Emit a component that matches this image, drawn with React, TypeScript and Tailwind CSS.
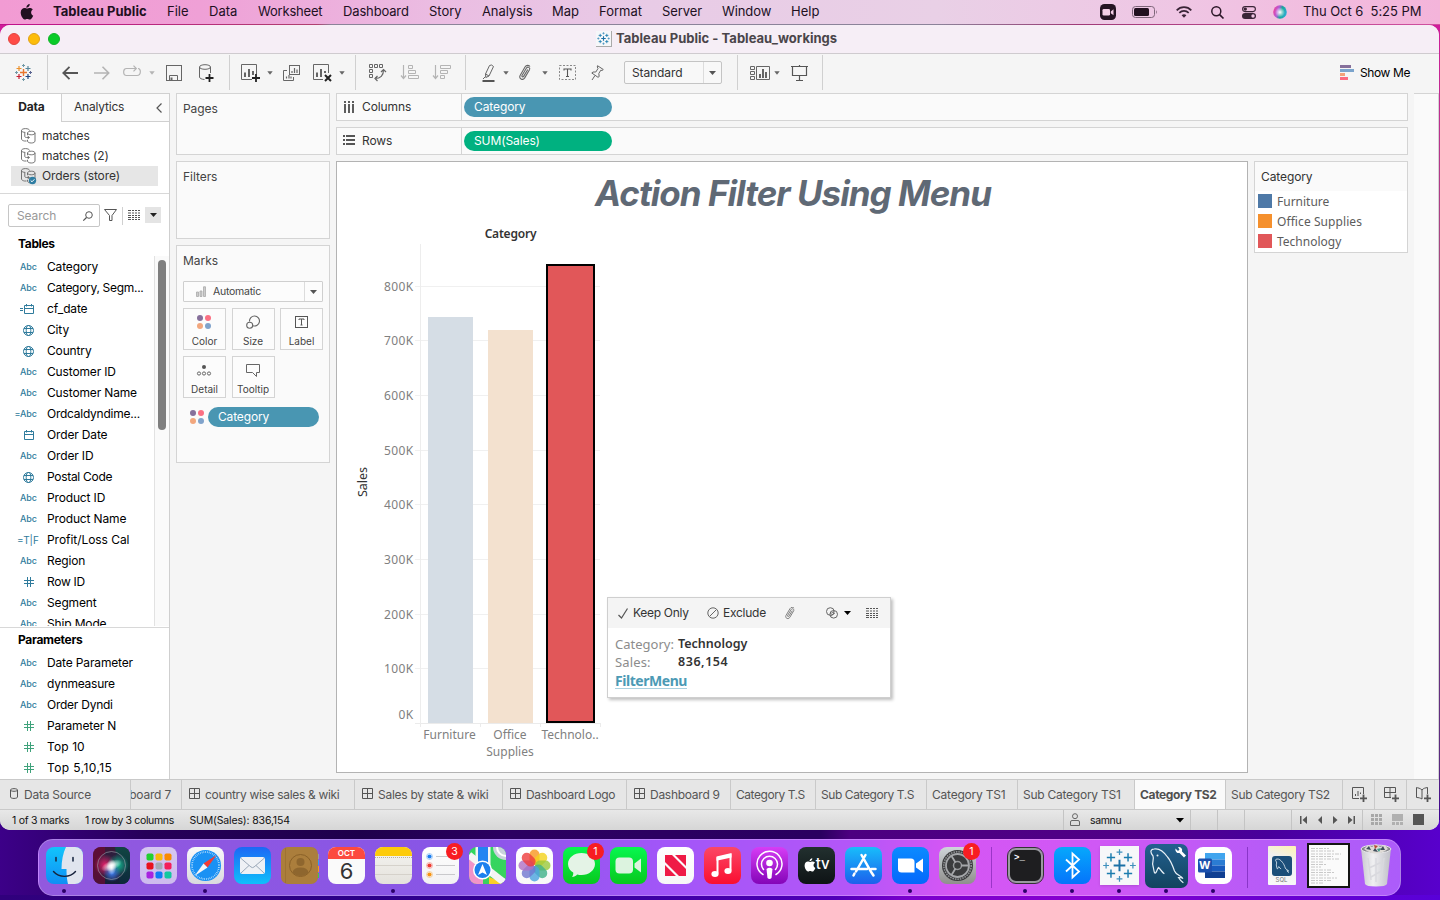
import React from "react";

type Kids = { children?: React.ReactNode };

const Svg = ({ w, h, c = "", children }: { w: number; h: number; c?: string } & Kids) => (
  <svg width={w} height={h} viewBox={`0 0 ${w} ${h}`} fill="none" className={`shrink-0 overflow-visible ${c}`}>
    {children}
  </svg>
);

const Plus = ({ x, y, r, c, w = 1 }: { x: number; y: number; r: number; c: string; w?: number }) => (
  <path d={`M${x - r} ${y}H${x + r}M${x} ${y - r}V${y + r}`} stroke={c} strokeWidth={w} />
);

const Caret = ({ c = "", color = "#666" }: { c?: string; color?: string }) => (
  <Svg w={6} h={4} c={c}>
    <path d="M0.3 0.3H5.7L3 3.8Z" fill={color} />
  </Svg>
);

/* ---------- menu bar ---------- */

const menus: [string, string][] = [
  ["File", "w-[42px]"],
  ["Data", "w-[49px]"],
  ["Worksheet", "w-[85px] tracking-[-0.2px]"],
  ["Dashboard", "w-[86px] tracking-[-0.15px]"],
  ["Story", "w-[53px]"],
  ["Analysis", "w-[70px] tracking-[-0.1px]"],
  ["Map", "w-[47px]"],
  ["Format", "w-[63px]"],
  ["Server", "w-[60px] tracking-[-0.1px]"],
  ["Window", "w-[69px] tracking-[-0.1px]"],
  ["Help", "w-[60px]"],
];

const MenuBar = () => (
  <div className="flex h-6 w-full shrink-0 items-center whitespace-nowrap bg-[linear-gradient(90deg,#f29bd3_0%,#efa0d6_14%,#ebbce2_30%,#e8cbe6_45%,#e9d0e6_65%,#efc6e4_82%,#f4b4da_100%)] text-[13px] text-[#21101f]">
    <Svg w={14} h={16} c="ml-[20px]">
      <path
        d="M9.700 0c.1 1-.3 1.900-.9 2.600-.6.7-1.500 1.200-2.400 1.100-.1-.9.300-1.900.9-2.500C7.900.5 8.900.1 9.700 0zM12.800 5.500c-.1.100-1.700 1-1.700 2.900 0 2.300 2 3.100 2.100 3.100 0 .1-.3 1.100-1.100 2.200-.7 1-1.400 1.900-2.400 1.900-1 0-1.300-.6-2.500-.6-1.100 0-1.500.6-2.500.6s-1.600-.9-2.400-2C1.400 12.300.7 10.300.7 8.500c0-3 1.900-4.600 3.900-4.600 1 0 1.900.7 2.500.7.6 0 1.600-.7 2.800-.7.500 0 2.100 0 2.900 1.600z"
        fill="#21101f"
      />
    </Svg>
    <span className="ml-[19px] w-[114px] font-bold tracking-[0.050px]">Tableau Public</span>
    {menus.map(([m, w]) => (
      <span key={m} className={`${w} shrink-0`}>
        {m}
      </span>
    ))}
    <Svg w={16} h={16} c="ml-[249px]">
      <rect width="16" height="16" rx="4.500" fill="#241422" />
      <rect x="2.500" y="5" width="7.500" height="6.500" rx="1.300" fill="#f3cfe6" />
      <path d="M10.800 7.500L13.500 5.300V11.200L10.800 9.200Z" fill="#f3cfe6" />
    </Svg>
    <Svg w={26} h={12} c="ml-[16px]">
      <rect x="0.500" y="0.500" width="22" height="11" rx="3" stroke="#7d6579" />
      <rect x="2" y="2" width="15" height="8" rx="1.500" fill="#21101f" />
      <path d="M24 4.200c1 .4 1 3.200 0 3.600z" fill="#7d6579" />
    </Svg>
    <Svg w={16} h={12} c="ml-[18px]">
      <path d="M0.700 4.300C4.700 0 11.300 0 15.300 4.300M3.300 6.900c2.700-2.700 6.700-2.700 9.400 0" stroke="#3a2437" strokeWidth="1.700" />
      <path d="M5.600 9.200C7 8 9 8 10.400 9.200L8 11.800Z" fill="#3a2437" />
    </Svg>
    <Svg w={13} h={13} c="ml-[19px]">
      <circle cx="5.300" cy="5.300" r="4.500" stroke="#2c1829" strokeWidth="1.500" />
      <path d="M8.600 8.600L12.500 12.500" stroke="#2c1829" strokeWidth="1.700" />
    </Svg>
    <Svg w={14} h={13} c="ml-[18px]">
      <rect x="0.600" y="0.600" width="12.800" height="5" rx="2.500" stroke="#3a2437" strokeWidth="1.100" />
      <circle cx="3.300" cy="3.100" r="1.700" fill="#3a2437" />
      <rect x="0" y="7" width="14" height="6" rx="3" fill="#3a2437" />
      <circle cx="11" cy="10" r="1.700" fill="#f0c6e4" />
    </Svg>
    <Svg w={14} h={14} c="ml-[17px]">
      <defs>
        <linearGradient id="siriS" x1="0" y1="0.300" x2="1" y2="0.600">
          <stop offset="0" stopColor="#f0409a" />
          <stop offset="0.350" stopColor="#b25bd8" />
          <stop offset="0.600" stopColor="#18a898" />
          <stop offset="1" stopColor="#2dacd8" />
        </linearGradient>
        <radialGradient id="siriG">
          <stop offset="0" stopColor="#fff" />
          <stop offset="1" stopColor="#fff" stopOpacity="0" />
        </radialGradient>
      </defs>
      <circle cx="7" cy="7" r="6.800" fill="url(#siriS)" />
      <circle cx="7" cy="7.300" r="5" fill="url(#siriG)" />
    </Svg>
    <span className="ml-[16px] whitespace-pre tracking-[-0.050px]">Thu Oct 6  5:25 PM</span>
  </div>
);

/* ---------- title + toolbar ---------- */

const TableauMark = ({ c = "" }: { c?: string }) => (
  <Svg w={17} h={17} c={c}>
    <Plus x={8.500} y={8.500} r={3.500} c="#e8762d" w={1.400} />
    <Plus x={4} y={4.500} r={2.500} c="#eb912c" w={1.200} />
    <Plus x={13} y={4.500} r={2.500} c="#59879b" w={1.200} />
    <Plus x={4} y={12.500} r={2.500} c="#c72035" w={1.200} />
    <Plus x={13} y={12.500} r={2.500} c="#1f457e" w={1.200} />
    <Plus x={8.500} y={1.500} r={1.500} c="#7199a6" />
    <Plus x={8.500} y={15.500} r={1.500} c="#7199a6" />
    <Plus x={1.500} y={8.500} r={1.500} c="#7199a6" />
    <Plus x={15.500} y={8.500} r={1.500} c="#5b6591" />
  </Svg>
);

const BlueMark = ({ s, bold }: { s: number; bold?: boolean }) => {
  const k = bold ? 1.500 : 1;
  return (
    <svg width={s} height={s} viewBox="0 0 16 16" fill="none">
      <rect width="16" height="16" fill="#f6f7f9" />
      <Plus x={8} y={8} r={2.400} c="#1b70a6" w={0.800 * k} />
      <Plus x={4.500} y={4.700} r={1.700} c="#1b7cae" w={0.600 * k} />
      <Plus x={11.500} y={4.700} r={1.700} c="#1b7cae" w={0.600 * k} />
      <Plus x={4.500} y={11.300} r={1.700} c="#1b7cae" w={0.600 * k} />
      <Plus x={11.500} y={11.300} r={1.700} c="#1b7cae" w={0.600 * k} />
      <Plus x={8} y={2.500} r={1.200} c="#3f90bd" w={0.500 * k} />
      <Plus x={8} y={13.500} r={1.200} c="#3f90bd" w={0.500 * k} />
      <Plus x={2.500} y={8} r={1.200} c="#3f90bd" w={0.500 * k} />
      <Plus x={13.500} y={8} r={1.200} c="#3f90bd" w={0.500 * k} />
    </svg>
  );
};

const clipPath =
  "M8.800 4.500L4.600 11.400c-.6 1-2.200.1-1.600-.9L7.500 3c1.200-1.900 4.100-.3 3 1.700L5.700 12.900c-1.900 3-6.300.6-4.600-2.500L6 2C7.500-.5 10.300.3 11 1.500";

const Sep = ({ c = "" }: { c?: string }) => <div className={`h-[35px] w-px shrink-0 bg-[#d0d0d0] ${c}`} />;

const Toolbar = () => (
  <div className="flex h-[39px] shrink-0 items-center bg-[#f5f5f5] pb-[2px]">
    <TableauMark c="ml-[15px]" />
    <Sep c="ml-[15px]" />
    <Svg w={16} h={14} c="ml-[14px]">
      <path d="M16 7H1.500M7.500 0.800L1.300 7L7.500 13.200" stroke="#555" strokeWidth="1.800" />
    </Svg>
    <Svg w={16} h={14} c="ml-[16px]">
      <path d="M0 7H14.500M8.500 0.800L14.700 7L8.500 13.200" stroke="#b4b4b4" strokeWidth="1.600" />
    </Svg>
    <Svg w={18} h={11} c="ml-[13px] -mt-[2px]">
      <path d="M7 2.500H3.500C-0.300 2.500 -0.300 9.500 3.500 9.500H14C18.300 9.500 18.300 2.500 15 2.500M4 2.500H13M10.500 -0.300L13.300 2.500L10.500 5.300" stroke="#b4b4b4" strokeWidth="1.200" />
    </Svg>
    <Caret c="ml-[8px]" color="#b4b4b4" />
    <Svg w={16} h={16} c="ml-[11px]">
      <rect x="0.500" y="0.500" width="15" height="15" stroke="#666" />
      <path d="M3.500 15.500V10.500H11.500V15.500" stroke="#666" />
      <path d="M4.500 12.500H6.500V15.500H4.500Z" fill="#666" />
    </Svg>
    <Svg w={16} h={18} c="ml-[17px]">
      <ellipse cx="6" cy="3" rx="5.500" ry="2.300" stroke="#666" />
      <path d="M0.500 3V13C0.500 14.300 2.500 15.300 5.500 15.500M11.500 3V9" stroke="#666" />
      <path d="M10.500 10V18M6.500 14H14.500" stroke="#222" strokeWidth="1.800" />
    </Svg>
    <Sep c="ml-[14px]" />
    <Svg w={19} h={18} c="ml-[11px]">
      <path d="M11 15.500H0.500V0.500H15.500V10" stroke="#666" />
      <path d="M4 13V8.500M8 13V5M12 11V7" stroke="#555" strokeWidth="1.800" />
      <path d="M15 10V18M11 14H19" stroke="#222" strokeWidth="1.800" />
    </Svg>
    <Caret c="ml-[7px]" />
    <Svg w={17} h={16} c="ml-[10px]">
      <rect x="6.500" y="0.500" width="10" height="9" stroke="#666" />
      <path d="M4 5.500H0.500V15.500H10.500V12" stroke="#666" />
      <path d="M9 8V6M11.500 8V3M14 8V4.500M3.500 13.500V11.500M6 13.500V10M8 13.500V11.500" stroke="#666" strokeWidth="1.200" />
    </Svg>
    <Svg w={19} h={18} c="ml-[13px]">
      <path d="M10 15.500H0.500V0.500H15.500V9" stroke="#666" />
      <path d="M4 13V8.500M8 13V5M12 9V7" stroke="#555" strokeWidth="1.800" />
      <path d="M12 11L18 17M18 11L12 17" stroke="#222" strokeWidth="2" />
    </Svg>
    <Caret c="ml-[7px]" />
    <Sep c="ml-[10px]" />
    <Svg w={17} h={17} c="ml-[13px]">
      <path d="M0.500 0.500h3v3h-3zM5.500 0.500h3v3h-3zM10.500 0.500h3v3h-3zM0.500 5.500h3v3h-3zM0.500 10.500h3v3h-3z" stroke="#666" />
      <path d="M6 14.500C11.500 14.500 14.500 11.500 14.500 6M12 8L14.500 5.500L17 8M8.500 12L6 14.500L8.500 17" stroke="#666" strokeWidth="1.200" />
    </Svg>
    <Svg w={18} h={15} c="ml-[15px]">
      <path d="M2.500 0V13M0 10.500L2.500 13.500L5 10.500" stroke="#b4b4b4" strokeWidth="1.200" />
      <path d="M7.500 0.500h4v3h-4zM7.500 5.500h7v3h-7zM7.500 10.500h10v3h-10z" stroke="#b4b4b4" />
    </Svg>
    <Svg w={18} h={15} c="ml-[14px]">
      <path d="M2.500 0V13M0 10.500L2.500 13.500L5 10.500" stroke="#b4b4b4" strokeWidth="1.200" />
      <path d="M7.500 0.500h10v3h-10zM7.500 5.500h7v3h-7zM7.500 10.500h4v3h-4z" stroke="#b4b4b4" />
    </Svg>
    <Sep c="ml-[14px]" />
    <Svg w={13} h={18} c="ml-[16px]">
      <path d="M3.500 10L7.500 1.500Q9.500 0 11.500 2.500L7 12L3.800 13.500ZM3.500 10L7 12M3.500 12.500L1 15" stroke="#666" />
      <path d="M0.500 17H12.500" stroke="#555" strokeWidth="2" />
    </Svg>
    <Caret c="ml-[8px]" />
    <Svg w={12} h={16} c="ml-[10px]">
      <path d={clipPath} stroke="#666" strokeWidth="1.100" />
    </Svg>
    <Caret c="ml-[11px]" />
    <Svg w={17} h={15} c="ml-[11px]">
      <rect x="0.500" y="0.500" width="16" height="14" stroke="#888" strokeDasharray="2 1.500" />
      <path d="M5 5.500V4H12V5.500M8.500 4V11.500M7 11.500H10" stroke="#555" strokeWidth="1.100" />
    </Svg>
    <Svg w={13} h={15} c="ml-[15px]">
      <path d="M6.500 0.700L12.300 4.500L11 5.500L9.800 5.200L7.800 8.500L8.200 11.500L7 12.300L0.800 8L2 7L4.800 7L7 3.500L6.300 2ZM4 10.500L1 15" stroke="#666" />
    </Svg>
    <div className="ml-[20px] flex h-[23px] w-[98px] shrink-0 items-center rounded-[2px] border border-[#c4c4c4] bg-[#f8f8f8] pl-[7px] text-[12px] text-[#333]">
      <span className="w-[71px] tracking-[-0.1px]">Standard</span>
      <div className="flex h-full flex-1 items-center justify-center border-l border-[#dcdcdc]">
        <Svg w={7} h={4}>
          <path d="M0 0H7L3.500 4Z" fill="#555" />
        </Svg>
      </div>
    </div>
    <Sep c="ml-[15px]" />
    <Svg w={20} h={14} c="ml-[12px]">
      <path d="M0.500 0.500h4v3h-4zM0.500 5.500h4v3h-4zM0.500 10.500h4v3h-4zM6.500 0.500h13v13h-13z" stroke="#666" />
      <path d="M10 12V8M13 12V3M16 12V6" stroke="#555" strokeWidth="1.800" />
    </Svg>
    <Caret c="ml-[4px]" />
    <Svg w={17} h={16} c="ml-[11px]">
      <path d="M0 1.500H17M8.500 0V1M1.500 1.500V10.500H15.500V1.500M8.500 10.500V15.500M5 15.500H12" stroke="#555" strokeWidth="1.200" />
    </Svg>
    <Sep c="ml-[14px]" />
    <div className="ml-auto mr-[29px] flex items-center gap-[6px] text-[12px] tracking-[-0.400px] text-black">
      <Svg w={14} h={15}>
        <path d="M0 0h11v3h-11z" fill="#86709b" />
        <path d="M0 4h14v3h-14z" fill="#7ba4cc" />
        <path d="M0 8h5v3h-5z" fill="#f2a27a" />
        <path d="M0 12h8v3h-8z" fill="#fb6b80" />
      </Svg>
      Show Me
    </div>
  </div>
);

/* ---------- data pane ---------- */

const SourceIcon = ({ checked }: { checked?: boolean }) => (
  <Svg w={15} h={16}>
    <path d="M5.500 13H3.500C2 12.800 0.500 12 0.500 11V2.500M0.500 2.500C0.500 1.400 2.300 0.600 4.500 0.600S8.500 1.400 8.500 2.500M0.500 2.500C0.500 3.600 2.200 4.400 4.300 4.400M3.800 4.500V8.500Q4 9.500 5.500 9.500H8M6.500 8L8.500 9.500L6.500 11" stroke="#666" strokeWidth="0.900" />
    <path d="M6.500 7V5C6.500 3.900 8.100 3.200 10.300 3.200S14 3.900 14 5V13C14 14.200 12.400 15 10.300 15S6.500 14.200 6.500 13V12M6.500 5C6.500 6 8.100 6.800 10.300 6.800S14 6 14 5" stroke="#666" strokeWidth="0.900" />
    {checked && (
      <>
        <circle cx="11.500" cy="12.500" r="3.700" fill="#2f7ea3" />
        <path d="M9.700 12.500L11 13.800L13.400 11.300" stroke="#fff" />
      </>
    )}
  </Svg>
);

const ListIcon = ({ c = "" }: { c?: string }) => (
  <Svg w={12} h={10} c={c}>
    <path d="M0 0.500H12M0 3H12M0 5.500H12M0 7.500H12M0 9.500H12" stroke="#555" strokeWidth="1" strokeDasharray="3 1 2 1 2 1 2 0" />
  </Svg>
);

type Kind = "abc" | "=abc" | "date" | "=date" | "geo" | "tf" | "num" | "gnum";

const KindIcon = ({ k }: { k: Kind }) => {
  const b = "#2f7b9c";
  if (k === "tf")
    return <span className="w-[20px] pr-[2px] text-right text-[10px] whitespace-nowrap tracking-[0px] text-[#2f7b9c]">=T|F</span>;
  if (k === "abc" || k === "=abc")
    return (
      <span className="flex w-[20px] justify-end text-[9px] font-medium tracking-[-0.050px] whitespace-nowrap text-[#2f7b9c]">
        {k === "abc" ? "Abc" : "=Abc"}
      </span>
    );
  if (k === "geo")
    return (
      <Svg w={11} h={11} c="ml-[6px]">
        <circle cx="5.500" cy="5.500" r="5" stroke={b} />
        <ellipse cx="5.500" cy="5.500" rx="2.300" ry="5" stroke={b} />
        <path d="M1 3.500H10M1 7.500H10" stroke={b} />
      </Svg>
    );
  if (k === "date" || k === "=date")
    return (
      <Svg w={11} h={10} c="ml-[7px]">
        <path d="M0.500 1.500h9v8h-9zM0.500 4.500h9M2.500 0v2.500M7.500 0v2.500" stroke={b} />
        {k === "=date" && <path d="M-4 4.500H-1M-4 6.500H-1" stroke={b} />}
      </Svg>
    );
  return (
    <Svg w={10} h={10} c="ml-[7px]">
      <path d="M3.500 0V10M6.500 0V10M0 3.500H10M0 6.500H10" stroke={k === "num" ? b : "#3fa27b"} />
    </Svg>
  );
};

const fields: [Kind, string, string?][] = [
  ["abc", "Category"],
  ["abc", "Category, Segm...", "tracking-[-0.300px]"],
  ["=date", "cf_date"],
  ["geo", "City"],
  ["geo", "Country"],
  ["abc", "Customer ID"],
  ["abc", "Customer Name"],
  ["=abc", "Ordcaldyndime...", "tracking-[-0.250px]"],
  ["date", "Order Date"],
  ["abc", "Order ID"],
  ["geo", "Postal Code", "tracking-[-0.300px]"],
  ["abc", "Product ID"],
  ["abc", "Product Name"],
  ["tf", "Profit/Loss Cal", "tracking-[-0.050px]"],
  ["abc", "Region"],
  ["num", "Row ID", "tracking-[-0.300px]"],
  ["abc", "Segment"],
  ["abc", "Ship Mode"],
];

const params: [Kind, string, string?][] = [
  ["abc", "Date Parameter"],
  ["abc", "dynmeasure", "tracking-[-0.250px]"],
  ["abc", "Order Dyndi", "tracking-[-0.250px]"],
  ["gnum", "Parameter N"],
  ["gnum", "Top 10", "tracking-[0.1px]"],
  ["gnum", "Top 5,10,15", "tracking-[0.400px]"],
];

const Field = ({ k, name, t = "tracking-[-0.150px]" }: { k: Kind; name: string; t?: string }) => (
  <div className={`flex h-[21px] shrink-0 items-center pl-[17px] text-[12px] text-black ${t}`}>
    <div className="flex w-[30px] shrink-0 items-center pt-[1px]">
      <KindIcon k={k} />
    </div>
    <span className="whitespace-nowrap">{name}</span>
  </div>
);

const DataPane = () => (
  <div className="flex w-[170px] shrink-0 flex-col border-r border-[#cfcfcf] bg-white">
    <div className="flex h-[29px] shrink-0 border-t border-[#d0d0d0] text-[12px] text-[#333]">
      <div className="flex w-[61px] items-center justify-center pb-[2px] pl-[2px] font-bold tracking-[-0.2px] text-[#222]">Data</div>
      <div className="flex flex-1 items-center border-b border-l border-[#d0d0d0] bg-[#fafafa] pl-[12px]">
        <span className="pb-px tracking-[-0.2px]">Analytics</span>
        <Svg w={6} h={10} c="ml-auto mr-[7px]">
          <path d="M5.500 0.500L1 5L5.500 9.500" stroke="#555" strokeWidth="1.200" />
        </Svg>
      </div>
    </div>
    <div className="flex h-[72px] shrink-0 flex-col border-b border-[#d8d8d8] pt-[4px] pl-[11px] text-[12px] text-[#333]">
      {["matches", "matches (2)", "Orders (store)"].map((s, i) => (
        <div key={s} className={`flex h-5 w-[147px] items-center gap-[6px] pl-[10px] tracking-[-0.1px] ${i === 2 ? "bg-[#e6e6e6]" : ""}`}>
          <SourceIcon checked={i === 2} />
          {s}
        </div>
      ))}
    </div>
    <div className="mt-[10px] flex h-[23px] shrink-0 items-center pl-[8px]">
      <div className="flex h-[23px] w-[92px] items-center rounded-[2px] border border-[#c6c6c6] pl-[8px] text-[12px] tracking-[-0.1px] text-[#999]">
        Search
        <Svg w={10} h={10} c="ml-auto mr-[6px]">
          <circle cx="6" cy="4" r="3.300" stroke="#555" />
          <path d="M3.500 6.500L0.300 9.700" stroke="#555" strokeWidth="1.200" />
        </Svg>
      </div>
      <Svg w={13} h={12} c="ml-[4px] -mt-px">
        <path d="M0.500 0.500H12.500L8 6.500V11.500H5.500V6.500Z" stroke="#555" />
      </Svg>
      <div className="ml-[5px] h-[18px] w-px bg-[#d0d0d0]" />
      <ListIcon c="ml-[5px] -mt-px" />
      <div className="-mt-px ml-[5px] flex h-4 w-4 items-center justify-center bg-[#e4e4e4]">
        <Svg w={7} h={4}>
          <path d="M0 0H7L3.500 4Z" fill="#222" />
        </Svg>
      </div>
    </div>
    <div className="mt-[8px] flex h-[18px] shrink-0 items-center pl-[18px] text-[12px] font-bold tracking-[-0.350px] text-black">Tables</div>
    <div className="mt-[3px] flex h-[370px] shrink-0 overflow-hidden">
      <div className="flex w-[154px] flex-col overflow-hidden">
        {fields.map(([k, n, t]) => (
          <Field key={n} k={k} name={n} t={t} />
        ))}
      </div>
      <div className="flex-1 border-l border-[#e2e2e2] bg-[#fafafa] pt-[4px] pl-[3px]">
        <div className="h-[170px] w-[8px] rounded-full bg-[#7f7f7f]" />
      </div>
    </div>
    <div className="mt-px flex h-[25px] shrink-0 items-center border-t border-[#d8d8d8] pl-[18px] text-[12px] font-bold tracking-[-0.300px] text-black">Parameters</div>
    {params.map(([k, n, t]) => (
      <Field key={n} k={k} name={n} t={t} />
    ))}
  </div>
);

/* ---------- cards ---------- */

const FourDots = ({ c = "" }: { c?: string }) => (
  <Svg w={14} h={14} c={c}>
    <circle cx="3" cy="3" r="3" fill="#86709b" />
    <circle cx="11" cy="3" r="3" fill="#fb7083" />
    <circle cx="3" cy="11" r="3" fill="#f2a77e" />
    <circle cx="11" cy="11" r="3" fill="#80a3cb" />
  </Svg>
);

const Card = ({ title, c, children }: { title: string; c: string } & Kids) => (
  <div className={`flex w-[154px] shrink-0 flex-col border border-[#d4d4d4] bg-[#fafafa] pl-[6px] ${c}`}>
    <div className="flex h-[29px] shrink-0 items-center text-[12px] tracking-[-0.050px] text-[#444]">{title}</div>
    {children}
  </div>
);

const MarkButton = ({ label, children }: { label: string } & Kids) => (
  <div className="flex h-[42px] w-[43px] flex-col items-center border border-[#d4d4d4] bg-[#fcfcfc] text-[10px] text-[#444]">
    <div className="mt-[3px] mr-px flex h-[20px] items-center">{children}</div>
    <span className="mt-[2px] leading-[15px] tracking-[0px]">{label}</span>
  </div>
);

const Cards = () => (
  <div className="ml-[6px] flex shrink-0 flex-col gap-[6px]">
    <Card title="Pages" c="h-[62px]" />
    <Card title="Filters" c="h-[78px]" />
    <Card title="Marks" c="h-[218px]">
      <div className="mt-[6px] flex h-[21px] w-[140px] shrink-0 items-center rounded-[1px] border border-[#cfcfcf] bg-[#fcfcfc] pl-[12px] text-[10.500px] text-[#444]">
        <Svg w={10} h={11}>
          <path d="M0.500 10.500V6H2.500V10.500ZM4 10.500V5H6V10.500ZM7.500 10.500V0.800H9.500V10.500Z" stroke="#aaa" fill="#ccc" strokeWidth="0.800" />
        </Svg>
        <span className="ml-[7px] w-[91px] tracking-[-0.250px]">Automatic</span>
        <div className="flex h-full flex-1 items-center justify-center border-l border-[#dcdcdc]">
          <Svg w={7} h={4}>
            <path d="M0 0H7L3.500 4Z" fill="#555" />
          </Svg>
        </div>
      </div>
      <div className="mt-[6px] grid w-[140px] grid-cols-3 gap-x-[5.500px] gap-y-[6px]">
        <MarkButton label="Color">
          <FourDots />
        </MarkButton>
        <MarkButton label="Size">
          <Svg w={14} h={14}>
            <path d="M3.500 6.500A5 5 0 1 1 7 10.800" stroke="#666" strokeWidth="1.100" />
            <circle cx="3.700" cy="10.200" r="3" stroke="#666" strokeWidth="1.100" />
          </Svg>
        </MarkButton>
        <MarkButton label="Label">
          <Svg w={13} h={12}>
            <rect x="0.500" y="0.500" width="12" height="11" stroke="#555" />
            <path d="M4 4V3H9V4M6.500 3V9M5.500 9H7.500" stroke="#555" />
          </Svg>
        </MarkButton>
        <MarkButton label="Detail">
          <Svg w={14} h={11}>
            <circle cx="7" cy="2" r="2" fill="#555" />
            <circle cx="2" cy="8.500" r="1.600" stroke="#666" />
            <circle cx="7" cy="8.500" r="1.600" stroke="#666" />
            <circle cx="12" cy="8.500" r="1.600" stroke="#666" />
          </Svg>
        </MarkButton>
        <MarkButton label="Tooltip">
          <Svg w={14} h={12}>
            <path d="M0.500 0.500H13.500V8.500H10.500V12.500L6.500 8.500H0.500Z" stroke="#666" />
          </Svg>
        </MarkButton>
      </div>
      <div className="mt-[9px] flex shrink-0 items-center pl-[7px]">
        <FourDots />
        <div className="ml-[4px] flex h-5 w-[111px] items-center rounded-full bg-[#4996b2] pl-[10px] text-[12px] tracking-[-0.150px] text-white">
          <span className="pb-px">Category</span>
        </div>
      </div>
    </Card>
  </div>
);

/* ---------- worksheet ---------- */

const Shelf = ({ label, pill, color, children }: { label: string; pill: string; color: string } & Kids) => (
  <div className="flex h-[28px] shrink-0 items-center border border-[#d4d4d4] bg-[#fafafa] text-[12px] text-[#333]">
    <div className="flex h-full w-[125px] items-center border-r border-[#d4d4d4] pl-[6px]">
      {children}
      <span className="ml-[7px] tracking-[-0.1px]">{label}</span>
    </div>
    <div className={`ml-[2px] flex h-5 w-[148px] items-center rounded-full pl-[10px] tracking-[-0.1px] text-white ${color}`}>{pill}</div>
  </div>
);

const gridY = [286, 340, 395, 450, 504, 559, 614, 668];
const axis = "fill-[#808080] text-[12px] [font-family:'Noto_Sans',sans-serif]";

const Chart = () => (
  <svg width="280" height="560" viewBox="337 212 280 560" className="shrink-0">
    <g shapeRendering="crispEdges">
      {gridY.map((y) => (
        <rect key={y} x="415" y={y} width="185" height="1" fill="#f0f0f0" />
      ))}
      <rect x="415" y="723" width="186" height="1" fill="#ebebeb" />
      {[420, 480, 540, 600].map((x) => (
        <rect key={x} x={x} y="723" width="1" height="4" fill="#ebebeb" />
      ))}
      <rect x="420" y="244" width="1" height="480" fill="#ededed" />
      <rect x="428" y="317" width="45" height="406" fill="#d5dde5" />
      <rect x="488" y="330" width="45" height="393" fill="#f3e1cf" />
      <rect x="546" y="264" width="49" height="459" fill="#000" />
      <rect x="548" y="266" width="45" height="455" fill="#e15759" />
    </g>
    <text x="510.500" y="238" textAnchor="middle" className="fill-[#333] text-[12px] font-semibold tracking-[-0.2px] [font-family:'Noto_Sans',sans-serif]">
      Category
    </text>
    {[...gridY, 714].map((y, i) => (
      <text key={y} x="413.500" y={y + 5} textAnchor="end" className="fill-[#808080] text-[12px] tracking-[0.350px] [font-family:'Noto_Sans',sans-serif]">
        {i === 8 ? "0K" : `${8 - i}00K`}
      </text>
    ))}
    <text transform="translate(367 482) rotate(-90)" textAnchor="middle" className="fill-[#333] text-[12.500px] [font-family:'Noto_Sans',sans-serif]">
      Sales
    </text>
    <text x="449.500" y="739" textAnchor="middle" className={axis}>
      Furniture
    </text>
    <text x="510" y="739" textAnchor="middle" className={axis}>
      Office
    </text>
    <text x="510" y="756" textAnchor="middle" className={axis}>
      Supplies
    </text>
    <text x="570" y="739" textAnchor="middle" className={axis}>
      Technolo..
    </text>
  </svg>
);

const Tooltip = () => (
  <div className="absolute top-[435px] left-[270px] flex h-[101px] w-[284px] flex-col border border-[#cfcfcf] bg-white shadow-[2px_2px_3px_rgba(0,0,0,0.25)]">
    <div className="flex h-[30px] shrink-0 items-center bg-[#f4f4f4] pl-[10px] text-[12px] text-[#333]">
      <Svg w={10} h={11}>
        <path d="M0.500 7L3.500 10L9.500 0.500" stroke="#555" strokeWidth="1.200" />
      </Svg>
      <span className="ml-[5px] w-[74px] tracking-[-0.300px]">Keep Only</span>
      <Svg w={12} h={12}>
        <circle cx="6" cy="6" r="5.200" stroke="#666" />
        <path d="M2.500 9.500L9.500 2.500" stroke="#666" />
      </Svg>
      <span className="ml-[4px] w-[62px] tracking-[-0.250px]">Exclude</span>
      <svg width="10" height="13" viewBox="0 0 12 16" fill="none" className="shrink-0">
        <path d={clipPath} stroke="#666" />
      </svg>
      <Svg w={12} h={12} c="ml-[31px]">
        <circle cx="4.300" cy="4.500" r="3.800" stroke="#666" />
        <circle cx="7.700" cy="7.300" r="3.800" stroke="#666" />
        <path d="M4 7L8 4.500M5 9L9 6" stroke="#666" strokeWidth="0.800" />
      </Svg>
      <Svg w={7} h={4} c="ml-[6px]">
        <path d="M0 0H7L3.500 4Z" fill="#000" />
      </Svg>
      <ListIcon c="ml-[15px]" />
    </div>
    <div className="flex flex-col pt-[7px] pl-[7px] text-[13px] leading-[18px] text-[#8c8c8c] [font-family:'Noto_Sans',sans-serif]">
      <div className="flex">
        <span className="w-[63px]">Category:</span>
        <span className="text-[12.500px] font-semibold text-[#333]">Technology</span>
      </div>
      <div className="flex">
        <span className="w-[63px] tracking-[0.150px]">Sales:</span>
        <span className="text-[12.500px] font-semibold tracking-[0.550px] text-[#333]">836,154</span>
      </div>
      <span className="mt-[2px] w-fit border-b border-[#a9d0df] text-[14px] leading-[15px] font-bold tracking-[-0.450px] text-[#4c9ab5]">FilterMenu</span>
    </div>
  </div>
);

const legend: [string, string, string][] = [
  ["Furniture", "bg-[#4e79a7]", ""],
  ["Office Supplies", "bg-[#f5902d]", "tracking-[0.080px]"],
  ["Technology", "bg-[#e15759]", ""],
];

const Worksheet = () => (
  <div className="ml-[6px] flex w-[1072px] shrink-0 flex-col gap-[6px]">
    <Shelf label="Columns" pill="Category" color="bg-[#4996b2]">
      <Svg w={12} h={12}>
        <path d="M2 0v2M2 3v9M6 0v2M6 3v9M10 0v2M10 3v9" stroke="#555" strokeWidth="1.900" />
      </Svg>
    </Shelf>
    <Shelf label="Rows" pill="SUM(Sales)" color="bg-[#00b180]">
      <Svg w={12} h={11} c="-mt-px">
        <path d="M0 1h2M3 1h9M0 5h2M3 5h9M0 9h2M3 9h9" stroke="#555" strokeWidth="1.900" />
      </Svg>
    </Shelf>
    <div className="flex gap-[6px]">
      <div className="relative flex h-[612px] w-[912px] flex-col border border-[#b3b3b3] bg-white">
        <div className="flex h-[50px] shrink-0 items-center justify-center pt-[12px] pl-[2px] text-[35px] font-bold tracking-[-0.970px] whitespace-nowrap text-[#5f6975] italic">
          Action Filter Using Menu
        </div>
        <Chart />
        <Tooltip />
      </div>
      <div className="flex h-[92px] w-[154px] flex-col border border-[#d4d4d4] bg-white">
        <div className="flex h-[29px] shrink-0 items-center bg-[#fafafa] pl-[6px] text-[12px] tracking-[-0.1px] text-[#333]">Category</div>
        {legend.map(([n, c, t]) => (
          <div key={n} className={`flex h-5 items-center gap-[5px] pl-[3px] text-[12px] text-[#5c5c5c] [font-family:'Noto_Sans',sans-serif] ${t}`}>
            <div className={`h-[14px] w-[14px] ${c}`} />
            <span className="pt-[2px]">{n}</span>
          </div>
        ))}
      </div>
    </div>
  </div>
);

/* ---------- sheet tabs + status ---------- */

const GridIcon = () => (
  <Svg w={11} h={11} c="mr-[5px] -mt-[2px]">
    <path d="M0.500 0.500h10v10h-10zM5.500 0.500v10M0.500 5.500h10" stroke="#555" />
  </Svg>
);

const tabs: { n: string; w: string; t: string; grid?: boolean; on?: boolean }[] = [
  { n: "country wise sales & wiki", w: "w-[173px]", t: "tracking-[-0.320px]", grid: true },
  { n: "Sales by state & wiki", w: "w-[148px]", t: "tracking-[-0.260px]", grid: true },
  { n: "Dashboard Logo", w: "w-[124px]", t: "tracking-[-0.330px]", grid: true },
  { n: "Dashboard 9", w: "w-[104px]", t: "tracking-[-0.270px]", grid: true },
  { n: "Category T.S", w: "w-[85px]", t: "tracking-[-0.450px]" },
  { n: "Sub Category T.S", w: "w-[111px]", t: "tracking-[-0.420px]" },
  { n: "Category TS1", w: "w-[91px]", t: "tracking-[-0.220px]" },
  { n: "Sub Category TS1", w: "w-[117px]", t: "tracking-[-0.250px]" },
  { n: "Category TS2", w: "w-[91px]", t: "tracking-[-0.350px]", on: true },
  { n: "Sub Category TS2", w: "w-[117px]", t: "tracking-[-0.320px]" },
];

const SheetTabs = () => (
  <div className="flex h-[31px] shrink-0 border-y border-[#c9c9c9] bg-[#e6e6e6] text-[12px] whitespace-nowrap text-[#555]">
    <div className="flex w-[131px] shrink-0 items-center border-r border-[#c9c9c9] pl-[10px] tracking-[-0.250px]">
      <Svg w={8} h={11} c="mr-[6px] -mt-[2px]">
        <path d="M0.500 2C0.500 0.200 7.500 0.200 7.500 2V9C7.500 10.900 0.500 10.900 0.500 9ZM0.500 2C0.500 3.700 7.500 3.700 7.500 2" stroke="#555" />
      </Svg>
      Data Source
    </div>
    <div className="flex w-[51px] shrink-0 items-center justify-end overflow-hidden border-r border-[#c9c9c9] pr-[10px] tracking-[-0.2px]">Dashboard 7</div>
    {tabs.map((t) => (
      <div
        key={t.n}
        className={`flex shrink-0 items-center border-r border-[#c9c9c9] ${t.w} ${t.t} ${t.grid ? "pl-[7px]" : "pl-[5px]"} ${t.on ? "bg-[#fafafa] font-bold text-[#505050]" : ""}`}
      >
        {t.grid && <GridIcon />}
        {t.n}
      </div>
    ))}
    <div className="flex w-8 shrink-0 items-center border-r border-[#c9c9c9] pl-[9px]">
      <Svg w={15} h={15}>
        <path d="M7 11.500H0.500V0.500H11.500V7M3.500 9V7M6 9V4M8.500 7V5.500" stroke="#555" />
        <path d="M11.500 7.500V15M8 11.300H15" stroke="#555" strokeWidth="1.800" />
      </Svg>
    </div>
    <div className="flex w-8 shrink-0 items-center border-r border-[#c9c9c9] pl-[9px]">
      <Svg w={15} h={15}>
        <path d="M7 10.500H0.500V0.500H11.500V6M6 0.500V10.500M0.500 5.500H11.500" stroke="#555" />
        <path d="M11.500 7.500V15M8 11.300H15" stroke="#555" strokeWidth="1.800" />
      </Svg>
    </div>
    <div className="flex flex-1 items-center pl-[9px]">
      <Svg w={15} h={15}>
        <path d="M6 3C4 1 2 1 0.500 0.500V10.500C2.500 10.500 4.500 11 6 12M6 3V12M6 3C7.500 1 9.500 1 11.500 0.500V7" stroke="#555" />
        <path d="M11.500 7.500V15M8 11.300H15" stroke="#555" strokeWidth="1.800" />
      </Svg>
    </div>
  </div>
);

const StatusBar = () => (
  <div className="flex h-[20px] shrink-0 items-center bg-[linear-gradient(180deg,#e8e8e8,#d6d6d6)] text-[10.500px] whitespace-nowrap text-[#111]">
    <span className="mt-px ml-[12px] w-[73px] tracking-[-0.250px]">1 of 3 marks</span>
    <span className="mt-px w-[104.500px] tracking-[-0.350px]">1 row by 3 columns</span>
    <span className="mt-px tracking-[-0.150px]">SUM(Sales): 836,154</span>
    <div className="ml-auto flex h-full w-[128px] items-center border-x border-[#c4c4c4] pl-[6px]">
      <Svg w={10} h={13} c="-mt-[2px]">
        <circle cx="5" cy="3.200" r="2.500" stroke="#666" />
        <path d="M0.500 12.500V9Q0.500 7.500 2 7.500H8Q9.500 7.500 9.500 9V12.500Z" stroke="#666" />
      </Svg>
      <span className="mt-px ml-[10px] tracking-[-0.350px]">samnu</span>
      <Svg w={8} h={5} c="ml-auto mr-[6px]">
        <path d="M0 0H8L4 4.500Z" fill="#000" />
      </Svg>
    </div>
    <div className="h-full w-[27px] border-r border-[#c4c4c4]" />
    <div className="h-full w-[27px] border-r border-[#c4c4c4]" />
    <div className="h-full w-[47px] border-r border-[#c4c4c4]" />
    <div className="flex h-full w-[71px] items-center gap-[11px] border-r border-[#c4c4c4] pb-px pl-[8px]">
      <Svg w={7} h={8}>
        <path d="M0 0h1.500v8H0zM7 0V8L2.500 4Z" fill="#555" />
      </Svg>
      <Svg w={4} h={8}>
        <path d="M4 0V8L0 4Z" fill="#555" />
      </Svg>
      <Svg w={4} h={8}>
        <path d="M0 0V8L4.500 4Z" fill="#555" />
      </Svg>
      <Svg w={7} h={8}>
        <path d="M5.500 0H7v8H5.500zM0 0V8L4.500 4Z" fill="#555" />
      </Svg>
    </div>
    <div className="flex w-[76px] items-center gap-[10px] pb-px pl-[8px]">
      <Svg w={11} h={11}>
        <path d="M0 0h3v3h-3zM4 0h3v3h-3zM8 0h3v3h-3zM0 4h3v3h-3zM4 4h3v3h-3zM8 4h3v3h-3zM0 8h3v3h-3zM4 8h3v3h-3zM8 8h3v3h-3z" fill="#a8a8a8" />
      </Svg>
      <Svg w={11} h={11}>
        <path d="M0 0h11v7h-11zM0 8h3v3h-3zM4 8h3v3h-3zM8 8h3v3h-3z" fill="#b0b0b0" />
      </Svg>
      <Svg w={11} h={11}>
        <rect width="11" height="11" fill="#555" />
      </Svg>
    </div>
  </div>
);

/* ---------- dock ---------- */

const Grad = ({ id, a, b }: { id: string; a: string; b: string }) => (
  <linearGradient id={id} x1="0" y1="0" x2="0" y2="1">
    <stop offset="0" stopColor={a} />
    <stop offset="1" stopColor={b} />
  </linearGradient>
);

const Glow = ({ id, c }: { id: string; c: string }) => (
  <radialGradient id={id}>
    <stop offset="0" stopColor={c} />
    <stop offset="1" stopColor={c} stopOpacity="0" />
  </radialGradient>
);

const Tile = ({ id, a, b, children }: { id: string; a: string; b: string } & Kids) => (
  <Svg w={37} h={37}>
    <defs>
      <Grad id={id} a={a} b={b} />
      <clipPath id={`${id}-c`}>
        <rect width="37" height="37" rx="8" />
      </clipPath>
    </defs>
    <rect width="37" height="37" rx="8" fill={`url(#${id})`} />
    <g clipPath={`url(#${id}-c)`}>{children}</g>
  </Svg>
);

const Slot = ({ dot, badge, children }: { dot?: boolean; badge?: string } & Kids) => (
  <div className="relative flex h-full w-[47px] shrink-0 flex-col items-center pt-[7px]">
    <div className="flex h-[37px] items-center justify-center">{children}</div>
    {dot && <div className="mt-[5px] mr-px h-1 w-1 rounded-full bg-[#2b0068]" />}
    {badge && (
      <div className="absolute top-[3px] right-[1px] flex h-[17px] w-[17px] items-center justify-center rounded-full bg-[#f81d22] text-[10.500px] text-white">
        {badge}
      </div>
    )}
  </div>
);

const Finder = () => (
  <Tile id="finder" a="#12c4fb" b="#0f8ff5">
    <path d="M20 0H37V37H22C21 32 20.500 29 20.500 22H15.500C15.500 14 17 6 20 0Z" fill="#e0e5ee" />
    <path d="M10 10.500V14M27 10.500V14" stroke="#1c2b45" strokeWidth="1.600" strokeLinecap="round" />
    <path d="M7.500 24.500C13 31 24 31 29.500 24.500" stroke="#16233c" strokeWidth="1.400" strokeLinecap="round" />
  </Tile>
);

const Siri = () => (
  <Tile id="siri" a="#3c1a3a" b="#122038">
    <defs>
      <Glow id="g1" c="#e2206a" />
      <Glow id="g2" c="#10b890" />
      <Glow id="g3" c="#3a7cf0" />
      <Glow id="g4" c="#ffffff" />
      <Grad id="g5" a="#0c4a44" b="#0c2a3c" />
    </defs>
    <path d="M0 0H12V37H0Z" fill="#6e0a34" opacity="0.700" />
    <path d="M22 0H37V37H27Z" fill="url(#g5)" opacity="0.900" />
    <circle cx="18.500" cy="18.500" r="14" fill="#2a2140" opacity="0.600" />
    <circle cx="12" cy="18" r="11" fill="url(#g1)" />
    <circle cx="25" cy="18" r="11" fill="url(#g2)" />
    <circle cx="19" cy="26" r="9" fill="url(#g3)" />
    <ellipse cx="18.500" cy="18.500" rx="11" ry="5" fill="url(#g4)" transform="rotate(-22 18.500 18.500)" />
    <ellipse cx="18.500" cy="20" rx="5" ry="8" fill="url(#g4)" />
    <circle cx="18.500" cy="18.500" r="14" stroke="#a9aeb8" strokeWidth="0.700" opacity="0.800" />
  </Tile>
);

const Launchpad = () => {
  const cs = ["#22d02f", "#f8b80a", "#f98a02", "#e8101d", "#a3a9b5", "#f41f5b", "#a724e0", "#0f7df5", "#12c8a1"];
  return (
    <Tile id="lp" a="#d6c6f1" b="#cdbbee">
      {cs.map((c, i) => (
        <rect key={c} x={6.500 + (i % 3) * 9} y={6.500 + Math.floor(i / 3) * 9} width="7" height="7" rx="1.800" fill={c} />
      ))}
    </Tile>
  );
};

const Safari = () => (
  <Tile id="saf" a="#f9f9fa" b="#d9dade">
    <circle cx="18.500" cy="18.500" r="15.500" fill="#1a91f4" />
    <circle cx="18.500" cy="18.500" r="13.500" stroke="#d8efff" strokeWidth="1.800" strokeDasharray="0.600 1.200" />
    <path d="M29.500 8L20.500 20.500L16.500 16.500Z" fill="#f33b34" />
    <path d="M7.500 29L16.500 16.500L20.500 20.500Z" fill="#f4f5f7" />
  </Tile>
);

const Mail = () => (
  <Tile id="mail" a="#1c68f5" b="#0fc0fb">
    <rect x="6" y="10" width="25" height="17" rx="2.500" fill="#eef1f5" />
    <path d="M6.500 11L17 20Q18.500 21.200 20 20L30.500 11M7 26L15 18.500M30 26L22 18.500" stroke="#9aa8b8" strokeWidth="1" />
  </Tile>
);

const Contacts = () => (
  <Svg w={37} h={37}>
    <path d="M35 7h3v5h-3z" fill="#9a9aa0" />
    <path d="M35 13h3v5h-3z" fill="#2f9df4" />
    <path d="M35 19h3v6h-3z" fill="#f39a1e" />
    <path d="M35 26h3v5h-3z" fill="#3fc850" />
    <rect width="37" height="37" rx="7" fill="#ab7e3c" />
    <path d="M4.500 1V36" stroke="#9a6e30" strokeWidth="0.800" />
    <circle cx="19.500" cy="18.500" r="11" stroke="#8a6128" />
    <circle cx="19.500" cy="15" r="4" fill="#8e662e" />
    <path d="M11.500 25.500Q12.500 20.500 19.500 20.500T27.500 25.500Q24 29 19.500 29T11.500 25.500Z" fill="#8e662e" />
  </Svg>
);

const Calendar = () => (
  <div className="flex h-[37px] w-[37px] flex-col overflow-hidden rounded-[8px] bg-[#fafafa] text-center">
    <div className="h-[11.500px] bg-[#fc4a3f] text-[8px] leading-[12px] font-semibold text-white">OCT</div>
    <div className="text-[22px] leading-[24px] text-[#333]">6</div>
  </div>
);

const Notes = () => (
  <Tile id="notes" a="#f5f4f1" b="#e4e2dc">
    <rect width="37" height="9" fill="#fdcb0a" />
    <path d="M0 10.500H37" stroke="#b9b19c" strokeDasharray="1 1" />
    <path d="M0 18.500H37M0 27.500H37" stroke="#cfccc4" strokeWidth="0.800" />
  </Tile>
);

const Reminders = () => (
  <Tile id="rem" a="#ffffff" b="#f1f1f3">
    {["#1a7ff0", "#ee3b30", "#f79413"].map((c, i) => (
      <g key={c}>
        <circle cx="7.500" cy={9.500 + i * 9} r="3" stroke={c} strokeWidth="0.500" opacity="0.700" />
        <circle cx="7.500" cy={9.500 + i * 9} r="2.100" fill={c} />
        <path d={`M14 ${9.500 + i * 9}H33`} stroke="#c9c9cc" />
      </g>
    ))}
  </Tile>
);

const Maps = () => (
  <Tile id="maps" a="#30d860" b="#3cd05c">
    <path d="M0 12L14 22V37H0Z" fill="#f193c8" />
    <path d="M20 30L37 37H20Z" fill="#fbcf28" />
    <path d="M0 8L37 37" stroke="#f4f4f4" strokeWidth="7" />
    <path d="M8 0V20M20 0V20M14 24L37 34" stroke="#f4f4f4" strokeWidth="3" />
    <rect x="9" width="10" height="22" fill="#2284f2" />
    <circle cx="37" cy="0" r="13" fill="#c9d3dc" />
    <circle cx="37" cy="0" r="9" stroke="#fff" strokeWidth="2" />
    <circle cx="13.500" cy="23" r="9.500" fill="#fff" />
    <circle cx="13.500" cy="23" r="8" fill="#1c80ee" />
    <path d="M13.500 17L18 28L13.500 25.500L9 28Z" fill="#fff" />
  </Tile>
);

const Photos = () => {
  const cs = ["#f8961e", "#f2d21b", "#9ac93b", "#40b28a", "#4aa3df", "#6f77cf", "#b06fc6", "#ee3b3b"];
  return (
    <Tile id="pho" a="#ffffff" b="#f8f8f8">
      {cs.map((c, i) => (
        <rect key={c} x="13.500" y="2.500" width="10" height="15.500" rx="5" fill={c} opacity="0.800" transform={`rotate(${i * 45} 18.500 18.500)`} />
      ))}
    </Tile>
  );
};

const Messages = () => (
  <Tile id="msg" a="#07f74f" b="#08c81d">
    <path d="M18.500 6C26 6 32 10.800 32 17S26 28 18.500 28C17 28 15.500 27.800 14.200 27.400C13 28.800 11 29.800 9 30C10 28.800 10.500 27 10.200 25.600C7 23.800 5 20.500 5 17C5 10.800 11 6 18.500 6Z" fill="#e4f3e6" />
  </Tile>
);

const FaceTime = () => (
  <Tile id="ft" a="#07f74f" b="#08c81d">
    <rect x="5.500" y="10.500" width="17.500" height="16" rx="4" fill="#dcf3df" />
    <path d="M24.500 16.500L31 11.500V25.500L24.500 20.500Z" fill="#dcf3df" />
  </Tile>
);

const News = () => (
  <Tile id="news" a="#ffffff" b="#f7f7f7">
    <path d="M8 8H15L29 22V29H22L8 15Z" fill="#ef1b46" />
    <path d="M18 8H29V19ZM8 18V29H19Z" fill="#ef1b46" />
  </Tile>
);

const Music = () => (
  <Tile id="mus" a="#fb4866" b="#fa0e30">
    <path d="M13.500 26.500V11L26.500 8V23.500" stroke="#fff" strokeWidth="2" />
    <path d="M12.500 9.500L27.500 6V10.500L12.500 13.800Z" fill="#fff" />
    <ellipse cx="11" cy="27" rx="3.600" ry="3" fill="#fff" />
    <ellipse cx="24" cy="24" rx="3.600" ry="3" fill="#fff" />
  </Tile>
);

const Podcasts = () => (
  <Tile id="pod" a="#d63df5" b="#8405b8">
    <circle cx="18.500" cy="16" r="3.300" fill="#fff" />
    <path d="M15.500 22Q18.500 19.500 21.500 22L20.500 31Q18.500 33 16.500 31Z" fill="#fff" />
    <path d="M12.500 22.500A8 8 0 1 1 24.500 22.500M12 27.500A12.500 12.500 0 1 1 25 27.500" stroke="#fff" strokeWidth="1.500" strokeLinecap="round" />
  </Tile>
);

const AppleTv = () => (
  <div className="flex h-[37px] w-[37px] items-center justify-center rounded-[8px] bg-[linear-gradient(180deg,#22302f,#0e1315)] pb-[2px] text-[15px] font-medium tracking-[-0.300px] text-white">
    <svg width="12" height="14" viewBox="0 0 14 16" className="mt-[1px] shrink-0">
      <path d="M9.700 0c.1 1-.3 1.900-.9 2.600-.6.7-1.500 1.200-2.400 1.100-.1-.9.300-1.900.9-2.500C7.900.5 8.900.1 9.700 0zM12.800 5.500c-.1.100-1.700 1-1.700 2.900 0 2.300 2 3.100 2.100 3.100 0 .1-.3 1.100-1.100 2.200-.7 1-1.400 1.900-2.400 1.900-1 0-1.300-.6-2.500-.6-1.100 0-1.500.6-2.500.6s-1.600-.9-2.400-2C1.400 12.300.7 10.300.7 8.500c0-3 1.900-4.600 3.900-4.600 1 0 1.900.7 2.500.7.6 0 1.600-.7 2.800-.7.500 0 2.100 0 2.900 1.600z" fill="#fff" />
    </svg>
    tv
  </div>
);

const AppStore = () => (
  <Tile id="as" a="#18bdfb" b="#1c60ec">
    <path d="M20.500 8L11 24.500M16.500 8L26.500 25.500L28.500 28.500M6.500 22H22M26.500 22H30.500M9.500 26.500L8.500 28.500" stroke="#fff" strokeWidth="2.500" strokeLinecap="round" />
  </Tile>
);

const Zoom = () => (
  <Tile id="zoom" a="#0b8bff" b="#0468fb">
    <path d="M6 11.500H19Q22.500 11.500 22.500 15V25.500H9.500Q6 25.500 6 22Z" fill="#fff" />
    <path d="M24 16.500L31 11.500V25.500L24 20.500Z" fill="#fff" />
  </Tile>
);

const Settings = () => (
  <Tile id="set" a="#cfd5da" b="#8f8f8c">
    <circle cx="18.500" cy="18.500" r="15.500" fill="#3b3c3e" />
    <circle cx="18.500" cy="18.500" r="13.700" stroke="#8f9194" strokeWidth="1.600" strokeDasharray="1.500 1" />
    <circle cx="18.500" cy="18.500" r="11.500" stroke="#a5a7aa" strokeWidth="1.800" />
    <circle cx="18.500" cy="18.500" r="4" stroke="#96989b" strokeWidth="1.500" />
    <path d="M22 18.500H30M16.500 15.500L12.500 9M16.500 21.500L12.500 28" stroke="#a5a7aa" strokeWidth="1.800" />
  </Tile>
);

const Terminal = () => (
  <div className="flex h-[35px] w-[35px] rounded-[8px] border-[2px] border-[#9a9aa0] bg-[#1e1e20] pl-[4px] text-[9px] leading-[16px] font-bold text-white outline-1 outline-[#333] [font-family:'Liberation_Mono',monospace]">
    {">_"}
  </div>
);

const Bluetooth = () => (
  <Tile id="bt" a="#06a8fc" b="#0574fb">
    <path d="M12 12.500L25 24.500L18.500 30.500V6.500L25 12.500L12 24.500" stroke="#fff" strokeWidth="1.800" />
  </Tile>
);

const Dolphin = () => (
  <Svg w={43} h={44}>
    <defs>
      <Grad id="dol" a="#23608f" b="#12435f" />
    </defs>
    <rect width="43" height="44" rx="7" fill="url(#dol)" />
    <path
      d="M38 38.500C36 37 35 36 33.500 33.500C35 33.500 37 33.500 38 34.500C36 31.500 31 31 29.500 27C27.500 21 26 17 22.500 13C19 8 14 4 9 5C4.500 5.500 5.500 9 8 12C9.500 16 6.500 18 8 22C9 26 9 29.500 10.500 29C12 28 12 25 13.500 23.500C16 26 17 28 19 29.500"
      stroke="#e6eff5"
      strokeWidth="1.200"
      strokeLinecap="round"
    />
    <circle cx="12.500" cy="11.500" r="1" fill="#e6eff5" />
    <path d="M30.500 4.500A3.500 3.500 0 0 0 34.500 9L39 13.500L41 11.500L37 7.500A3.500 3.500 0 0 0 33 3L34.500 5.500L33 7Z" fill="#fff" />
  </Svg>
);

const Word = () => (
  <div className="relative flex h-[37px] w-[37px] items-center rounded-[8px] bg-white">
    <Svg w={37} h={37}>
      <path d="M10 6h20v6.500H10z" fill="#41a5ee" />
      <path d="M10 12.500h20v6H10z" fill="#2b7cd3" />
      <path d="M10 18.500h20v6H10z" fill="#185abd" />
      <path d="M10 24.500h20V31H10z" fill="#103f91" />
      <rect x="3" y="11.500" width="14" height="14" rx="1.500" fill="#1b50ad" />
    </Svg>
    <span className="absolute top-[11px] left-[4px] text-[11px] leading-[15px] font-bold text-white">W</span>
  </div>
);

const SqlFile = () => (
  <div className="relative flex h-[39px] w-[28px] flex-col items-center rounded-[1px] bg-[linear-gradient(200deg,#fff3b0,#f0f0f0_35%,#fafafa)]">
    <div className="mt-[10px] flex h-[20px] w-[20px] items-center justify-center rounded-[3px] bg-[#1b4f79]">
      <svg width="18" height="18" viewBox="0 0 43 44" fill="none">
        <path
          d="M38 38.500C36 37 35 36 33.500 33.500C35 33.500 37 33.500 38 34.500C36 31.500 31 31 29.500 27C27.500 21 26 17 22.500 13C19 8 14 4 9 5C4.500 5.500 5.500 9 8 12C9.500 16 6.500 18 8 22C9 26 9 29.500 10.500 29C12 28 12 25 13.500 23.500C16 26 17 28 19 29.500"
          stroke="#e2ecf3"
          strokeWidth="2"
        />
      </svg>
    </div>
    <span className="text-[6px] leading-[8px] text-[#777]">SQL</span>
  </div>
);

const DocWindow = () => (
  <Svg w={43} h={45}>
    <rect x="1" y="1" width="41" height="43" fill="#fbfbfb" stroke="#141414" strokeWidth="2" />
    <path d="M4 5.500h18M4 8h24M4 11h30M4 13.500h22M4 16h28M4 19h12M4 21.500h16M4 24h10M4 27h20M4 29.500h24M4 32h18M4 35h26M4 37.500h20M4 40h12" stroke="#bdbdbd" strokeWidth="0.800" strokeDasharray="4 1 2 1" />
  </Svg>
);

const Trash = () => (
  <Svg w={32} h={43}>
    <defs>
      <linearGradient id="tr" x1="0" y1="0" x2="1" y2="0">
        <stop offset="0" stopColor="#c9c9cf" />
        <stop offset="0.400" stopColor="#f0f0f2" />
        <stop offset="1" stopColor="#bfbfc7" />
      </linearGradient>
    </defs>
    <path d="M1 4H31L27 40Q26 42.500 16 42.500T5 40Z" fill="url(#tr)" />
    <ellipse cx="16" cy="5" rx="15" ry="4" fill="#86868c" stroke="#e6e6ea" />
    <path d="M4 5L8 1L12 3L16 0L20 3L25 1L28 5Q16 14 4 5Z" fill="#dedad6" />
    <path d="M6 5l3-3 2 4zM20 6l3-4 2 4zM13 7l2-3 3 4z" fill="#3f4c5b" />
    <path d="M14 1l4 1-3 3z" fill="#b84a3a" />
    <path d="M17 5l4-1-2 4z" fill="#3c9a8a" />
    <path d="M8 14L11 36M16 14V38M24 14L21 36M9 24L22 18M11 33L23 26" stroke="#d9d9de" strokeWidth="1.500" />
  </Svg>
);

const Dock = () => (
  <div className="ml-[38px] flex h-[57px] w-[1363px] shrink-0 rounded-[15px] border border-white/25 bg-[linear-gradient(90deg,#9259de_0%,#8855e6_30%,#a256f8_46%,#b456f8_60%,#d556f4_67%,#cf58f5_78%,#b75bf7_90%,#ac5cfa_100%)] pl-[2px]">
    <Slot dot><Finder /></Slot>
    <Slot><Siri /></Slot>
    <Slot><Launchpad /></Slot>
    <Slot dot><Safari /></Slot>
    <Slot><Mail /></Slot>
    <Slot><Contacts /></Slot>
    <Slot><Calendar /></Slot>
    <Slot dot><Notes /></Slot>
    <Slot badge="3"><Reminders /></Slot>
    <Slot><Maps /></Slot>
    <Slot><Photos /></Slot>
    <Slot badge="1"><Messages /></Slot>
    <Slot><FaceTime /></Slot>
    <Slot><News /></Slot>
    <Slot><Music /></Slot>
    <Slot><Podcasts /></Slot>
    <Slot><AppleTv /></Slot>
    <Slot><AppStore /></Slot>
    <Slot dot><Zoom /></Slot>
    <Slot badge="1"><Settings /></Slot>
    <div className="mt-[7px] mr-[10px] ml-[10px] h-[41px] w-px shrink-0 bg-[#9a35c8]" />
    <Slot dot><Terminal /></Slot>
    <Slot dot><Bluetooth /></Slot>
    <Slot dot>
      <div className="bg-white shadow-sm"><BlueMark s={39} /></div>
    </Slot>
    <Slot dot><Dolphin /></Slot>
    <Slot dot><Word /></Slot>
    <div className="mt-[7px] mr-[10px] ml-[10px] h-[41px] w-px shrink-0 bg-[#8a35c8]" />
    <Slot><SqlFile /></Slot>
    <Slot><DocWindow /></Slot>
    <Slot><Trash /></Slot>
  </div>
);

export default function App() {
  return (
    <div className="flex h-[900px] w-[1440px] flex-col overflow-hidden bg-[linear-gradient(180deg,#d4189c_0%,#a04a80_30%,#5a2a80_85%,#3c0090_91%)] [font-family:Inter,'Liberation_Sans',sans-serif]">
      <MenuBar />
      <div className="h-px w-full shrink-0 bg-[linear-gradient(90deg,#c0108c_0%,#b04070_22%,#8b8399_23%,#8b8399_65%,#a03a78_75%,#d050a0_100%)]" />
      <div className="flex h-[875px] shrink-0 flex-col bg-[linear-gradient(90deg,#30007c_0%,#2c0088_25%,#3a00a0_42%,#5000b8_58%,#7a00cc_63%,#8800d0_75%,#6a00d0_88%,#5800d8_100%),linear-gradient(90deg,#3c0088_0%,#26005a_10%,#1e004c_25%,#2c0062_35%,#2a0060_57%,#4c0080_59%,#500088_78%,#48009c_88%,#5800cc_100%)] bg-[length:100%_5px,100%_80px] bg-bottom bg-no-repeat">
        <div className="flex h-[805px] w-[1439px] shrink-0 flex-col overflow-hidden rounded-[10px] bg-[#f5f5f5]">
          <div className="flex h-[29px] shrink-0 items-center border-b border-[#cfcbcf] bg-[#f6eef6] pl-[8px]">
            <div className="flex gap-2">
              <div className="h-3 w-3 rounded-full border border-[#e2443f] bg-[#ff4b47]" />
              <div className="h-3 w-3 rounded-full border border-[#e0a118] bg-[#fdbc0a]" />
              <div className="h-3 w-3 rounded-full border border-[#12b32a] bg-[#0acb28]" />
            </div>
            <div className="ml-[536px] flex items-center gap-[4px] text-[13px] font-bold tracking-[0.020px] whitespace-nowrap text-[#4a454a]">
              <div className="border-r border-b border-[#aaa]">
                <BlueMark s={15} bold />
              </div>
              Tableau Public - Tableau_workings
            </div>
          </div>
          <Toolbar />
          <div className="flex h-[686px] shrink-0">
            <DataPane />
            <Cards />
            <Worksheet />
            <div className="ml-[6px] flex-1 border-t border-r border-[#d4d4d4] bg-[#fafafa]" />
          </div>
          <SheetTabs />
          <StatusBar />
        </div>
        <div className="-mt-[10px] flex h-[80px] shrink-0 flex-col pt-[19px]">
          <Dock />
        </div>
      </div>
    </div>
  );
}
